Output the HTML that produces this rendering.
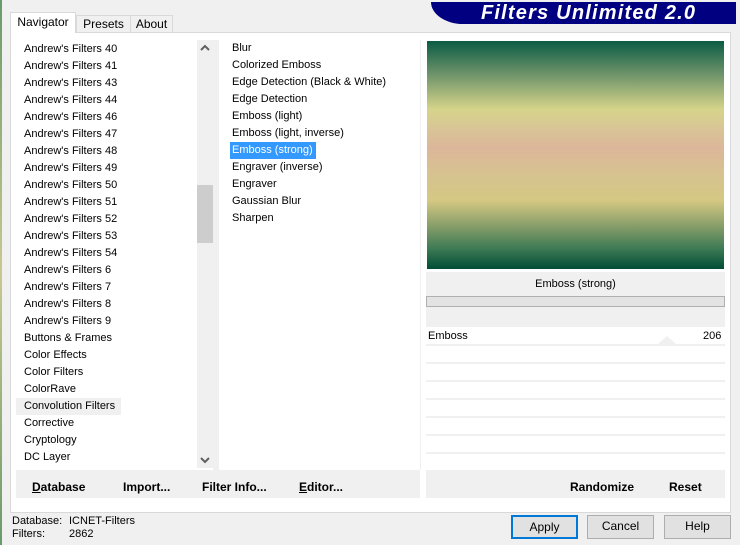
<!DOCTYPE html>
<html><head><style>
*{margin:0;padding:0;box-sizing:border-box}
body{width:740px;height:545px;background:#f0f0f0;font-family:"Liberation Sans",sans-serif;font-size:11px;color:#000;position:relative;overflow:hidden}
.a{position:absolute}
.li{position:absolute;left:0;height:17px;line-height:17px;padding-left:8px;white-space:nowrap}
.btn{position:absolute;background:#e1e1e1;border:1px solid #adadad;text-align:center;line-height:21px;font-size:12px}
.bb{position:absolute;font-weight:bold;top:480px;font-size:12px}
</style></head><body>
<div class="a" style="left:0;top:0;width:2px;height:545px;background:linear-gradient(#6a9a6a,#c8c890,#6a9a6a)"></div>
<div class="a" style="left:431px;top:2px;width:305px;height:22px;background:#000080;border-bottom-left-radius:32px 22px;color:#fff;font-weight:bold;font-style:italic;font-size:20px;line-height:22px;padding-left:50px;letter-spacing:1.2px">Filters Unlimited 2.0</div>
<div class="a" style="left:10px;top:12px;width:66px;height:21px;background:#fff;border:1px solid #d9d9d9;border-bottom:none;text-align:center;line-height:19px;z-index:2;font-size:12px">Navigator</div>
<div class="a" style="left:76px;top:15px;width:55px;height:18px;background:#f0f0f0;border:1px solid #d9d9d9;text-align:center;line-height:17px;font-size:12px">Presets</div>
<div class="a" style="left:130px;top:15px;width:43px;height:18px;background:#f0f0f0;border:1px solid #d9d9d9;text-align:center;line-height:17px;font-size:12px">About</div>
<div class="a" style="left:10px;top:32px;width:721px;height:481px;background:#fff;border:1px solid #d9d9d9"></div>
<div class="a" style="left:16px;top:40px;width:181px;height:428px;overflow:hidden">
<div class="li" style="top:1px">Andrew's Filters 40</div>
<div class="li" style="top:18px">Andrew's Filters 41</div>
<div class="li" style="top:35px">Andrew's Filters 43</div>
<div class="li" style="top:52px">Andrew's Filters 44</div>
<div class="li" style="top:69px">Andrew's Filters 46</div>
<div class="li" style="top:86px">Andrew's Filters 47</div>
<div class="li" style="top:103px">Andrew's Filters 48</div>
<div class="li" style="top:120px">Andrew's Filters 49</div>
<div class="li" style="top:137px">Andrew's Filters 50</div>
<div class="li" style="top:154px">Andrew's Filters 51</div>
<div class="li" style="top:171px">Andrew's Filters 52</div>
<div class="li" style="top:188px">Andrew's Filters 53</div>
<div class="li" style="top:205px">Andrew's Filters 54</div>
<div class="li" style="top:222px">Andrew's Filters 6</div>
<div class="li" style="top:239px">Andrew's Filters 7</div>
<div class="li" style="top:256px">Andrew's Filters 8</div>
<div class="li" style="top:273px">Andrew's Filters 9</div>
<div class="li" style="top:290px">Buttons &amp; Frames</div>
<div class="li" style="top:307px">Color Effects</div>
<div class="li" style="top:324px">Color Filters</div>
<div class="li" style="top:341px">ColorRave</div>
<div class="li" style="top:358px;background:#f0f0f0;padding-right:6px">Convolution Filters</div>
<div class="li" style="top:375px">Corrective</div>
<div class="li" style="top:392px">Cryptology</div>
<div class="li" style="top:409px">DC Layer</div>
<div class="li" style="top:426px">DC Special</div>
</div>
<div class="a" style="left:197px;top:40px;width:16px;height:428px;background:#f0f0f0"></div>
<div class="a" style="left:197px;top:185px;width:16px;height:58px;background:#cdcdcd"></div>
<svg class="a" style="left:200px;top:44px" width="10" height="8"><path d="M1 6 L5 2 L9 6" fill="none" stroke="#606060" stroke-width="2"/></svg>
<svg class="a" style="left:200px;top:456px" width="10" height="8"><path d="M1 2 L5 6 L9 2" fill="none" stroke="#606060" stroke-width="2"/></svg>
<div class="a" style="left:213px;top:40px;width:6px;height:430px;background:#f0f0f0"></div>
<div class="a" style="left:224px;top:40px;width:196px;height:200px">
<div class="li" style="top:0">Blur</div>
<div class="li" style="top:17px">Colorized Emboss</div>
<div class="li" style="top:34px">Edge Detection (Black &amp; White)</div>
<div class="li" style="top:51px">Edge Detection</div>
<div class="li" style="top:68px">Emboss (light)</div>
<div class="li" style="top:85px">Emboss (light, inverse)</div>
<div class="li" style="top:102px;left:6px;padding-left:2px;padding-right:3px;background:#3399ff;color:#fff">Emboss (strong)</div>
<div class="li" style="top:119px">Engraver (inverse)</div>
<div class="li" style="top:136px">Engraver</div>
<div class="li" style="top:153px">Gaussian Blur</div>
<div class="li" style="top:170px">Sharpen</div>
</div>
<div class="a" style="left:420px;top:40px;width:1px;height:430px;background:#f0f0f0"></div>
<div class="a" style="left:427px;top:41px;width:297px;height:228px;background:linear-gradient(#0b5c45 0%,#6a9168 14%,#d6d48a 30%,#d8c696 38%,#dcb69a 47%,#d6c48e 60%,#d4c882 70%,#8fa26c 80%,#3e7a55 91%,#004d35 100%)"></div>
<div class="a" style="left:426px;top:272px;width:299px;height:55px;background:#f0f0f0"></div>
<div class="a" style="left:426px;top:278px;width:299px;text-align:center">Emboss (strong)</div>
<div class="a" style="left:426px;top:296px;width:299px;height:11px;background:#e3e3e3;border:1px solid #b0b0b0"></div>
<div class="a" style="left:428px;top:330px">Emboss</div>
<div class="a" style="left:703px;top:330px">206</div>
<div class="a" style="left:658px;top:336px;width:0;height:0;border-left:9px solid transparent;border-right:9px solid transparent;border-bottom:8px solid #f0f0f0"></div>
<div class="a" style="left:426px;top:344px;width:299px;height:2px;background:#f0f0f0"></div>
<div class="a" style="left:426px;top:362px;width:299px;height:2px;background:#f0f0f0"></div>
<div class="a" style="left:426px;top:380px;width:299px;height:2px;background:#f0f0f0"></div>
<div class="a" style="left:426px;top:398px;width:299px;height:2px;background:#f0f0f0"></div>
<div class="a" style="left:426px;top:416px;width:299px;height:2px;background:#f0f0f0"></div>
<div class="a" style="left:426px;top:434px;width:299px;height:2px;background:#f0f0f0"></div>
<div class="a" style="left:426px;top:452px;width:299px;height:2px;background:#f0f0f0"></div>
<div class="a" style="left:16px;top:470px;width:404px;height:28px;background:#f0f0f0"></div>
<div class="a" style="left:426px;top:470px;width:299px;height:28px;background:#f0f0f0"></div>
<div class="bb" style="left:32px"><u>D</u>atabase</div>
<div class="bb" style="left:123px">Import...</div>
<div class="bb" style="left:202px">Filter Info...</div>
<div class="bb" style="left:299px"><u>E</u>ditor...</div>
<div class="bb" style="left:570px">Randomize</div>
<div class="bb" style="left:669px">Reset</div>
<div class="a" style="left:12px;top:515px;line-height:13px">Database:<br>Filters:</div>
<div class="a" style="left:69px;top:515px;line-height:13px">ICNET-Filters<br>2862</div>
<div class="btn" style="left:511px;top:515px;width:67px;height:24px;border:2px solid #0078d7;line-height:20px">Apply</div>
<div class="btn" style="left:587px;top:515px;width:67px;height:24px">Cancel</div>
<div class="btn" style="left:664px;top:515px;width:67px;height:24px">Help</div>
</body></html>
